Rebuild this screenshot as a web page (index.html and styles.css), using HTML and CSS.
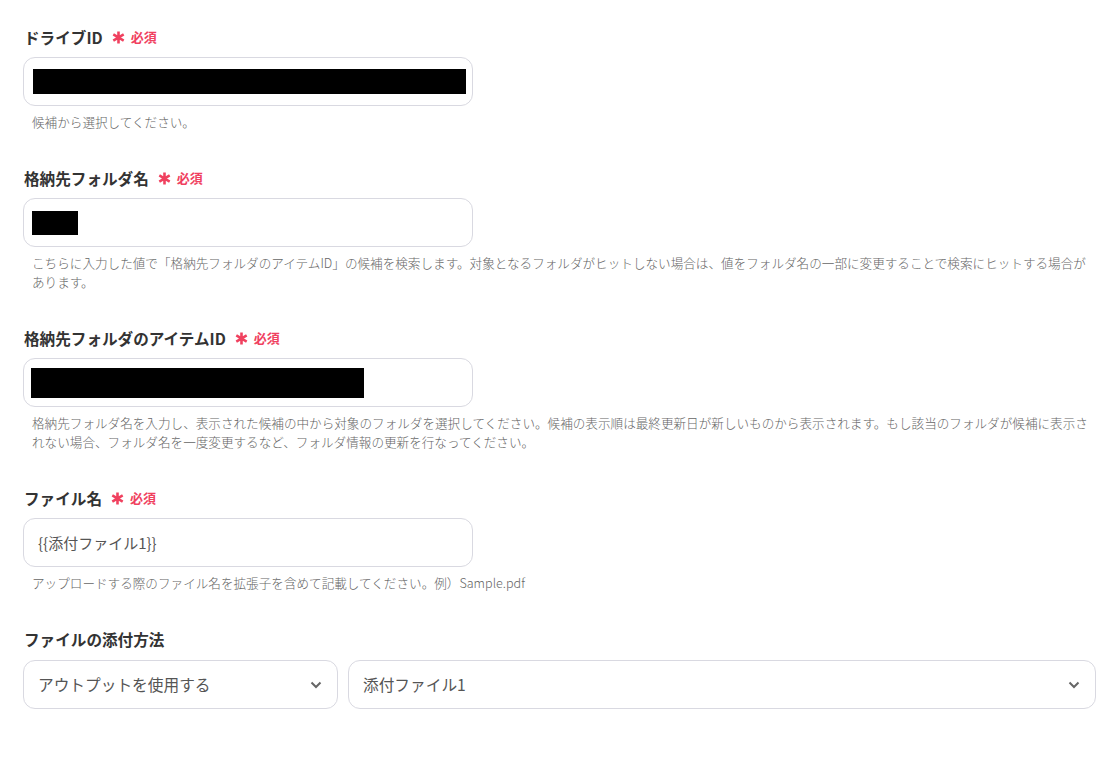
FILE: index.html
```html
<!DOCTYPE html>
<html>
<head>
    <title>ファイルのアップロード設定</title>
    <link rel="stylesheet" href="styles.css">
</head>
<body>
    <div class="form">

        <div class="field">
            <div class="label">ドライブID
                <span class="req"><svg class="star" viewBox="0 0 12 12"><path d="M6 0.5V11.5M1.2 3.2L10.8 8.8M1.2 8.8L10.8 3.2"/></svg>必須</span>
            </div>
            <div class="box"><span class="mask mask-drive"></span></div>
            <p class="hint">候補から選択してください。</p>
        </div>

        <div class="field">
            <div class="label">格納先フォルダ名
                <span class="req"><svg class="star" viewBox="0 0 12 12"><path d="M6 0.5V11.5M1.2 3.2L10.8 8.8M1.2 8.8L10.8 3.2"/></svg>必須</span>
            </div>
            <div class="box"><span class="mask mask-folder"></span></div>
            <p class="hint">こちらに入力した値で「格納先フォルダのアイテムID」の候補を検索します。対象となるフォルダがヒットしない場合は、値をフォルダ名の一部に変更することで検索にヒットする場合があります。</p>
        </div>

        <div class="field">
            <div class="label">格納先フォルダのアイテムID
                <span class="req"><svg class="star" viewBox="0 0 12 12"><path d="M6 0.5V11.5M1.2 3.2L10.8 8.8M1.2 8.8L10.8 3.2"/></svg>必須</span>
            </div>
            <div class="box"><span class="mask mask-item"></span></div>
            <p class="hint">格納先フォルダ名を入力し、表示された候補の中から対象のフォルダを選択してください。候補の表示順は最終更新日が新しいものから表示されます。もし該当のフォルダが候補に表示されない場合、フォルダ名を一度変更するなど、フォルダ情報の更新を行なってください。</p>
        </div>

        <div class="field">
            <div class="label">ファイル名
                <span class="req"><svg class="star" viewBox="0 0 12 12"><path d="M6 0.5V11.5M1.2 3.2L10.8 8.8M1.2 8.8L10.8 3.2"/></svg>必須</span>
            </div>
            <div class="box box-text">{{添付ファイル1}}</div>
            <p class="hint">アップロードする際のファイル名を拡張子を含めて記載してください。例）Sample.pdf</p>
        </div>

        <div class="field">
            <div class="label">ファイルの添付方法</div>
            <div class="select-row">
                <div class="select select-type">
                    <span>アウトプットを使用する</span>
                    <svg class="chevron" viewBox="0 0 12 8"><path d="M1.5 1.5L6 6L10.5 1.5"/></svg>
                </div>
                <div class="select select-value">
                    <span>添付ファイル1</span>
                    <svg class="chevron" viewBox="0 0 12 8"><path d="M1.5 1.5L6 6L10.5 1.5"/></svg>
                </div>
            </div>
        </div>

    </div>
</body>
</html>
```

FILE: styles.css
```css
body {
    font-family: "Noto Sans CJK JP", "Noto Sans", sans-serif;
    background: #fff;
    margin: 0;
    padding: 0;
}

.form {
    padding: 27px 15px 0 23px;
}

.field {
    margin-bottom: 37px;
}

.label {
    display: flex;
    align-items: center;
    gap: 9px;
    margin-left: 1px;
    font-size: 15.6px;
    line-height: 20px;
    font-weight: bold;
    color: #333;
}

.req {
    display: flex;
    align-items: center;
    gap: 6px;
    font-size: 13px;
    font-weight: bold;
    color: #f0415f;
}

.star {
    width: 13px;
    height: 13px;
    stroke: #f0415f;
    stroke-width: 2.4;
    fill: none;
}

.box {
    width: 450px;
    height: 49px;
    margin-top: 10px;
    padding: 0 4px 0 9px;
    display: flex;
    align-items: center;
    border: 1px solid #d9d9e1;
    border-radius: 12px;
    box-sizing: border-box;
}

.box-text {
    padding: 0 14px;
    font-size: 15px;
    color: #555;
}

.mask {
    display: block;
    flex-shrink: 0;
    background: #000;
}

.mask-drive {
    width: 433px;
    height: 25px;
}

.mask-folder {
    width: 46px;
    height: 24px;
    margin-left: -1px;
}

.mask-item {
    width: 333px;
    height: 30px;
    margin-left: -2px;
}

.hint {
    margin: 6px 0 0 9px;
    font-size: 12.6px;
    line-height: 19px;
    font-weight: 300;
    color: #666;
}

.select-row {
    display: flex;
    gap: 10px;
    margin-top: 11px;
}

.select {
    height: 49px;
    padding: 0 15px 0 14px;
    display: flex;
    align-items: center;
    justify-content: space-between;
    border: 1px solid #d9d9e1;
    border-radius: 12px;
    box-sizing: border-box;
    font-size: 15.7px;
    color: #555;
}

.select-value {
    flex: 1;
}

.select-type {
    width: 315px;
}

.chevron {
    width: 12px;
    height: 8px;
    stroke: #666;
    stroke-width: 2;
    fill: none;
}
```
